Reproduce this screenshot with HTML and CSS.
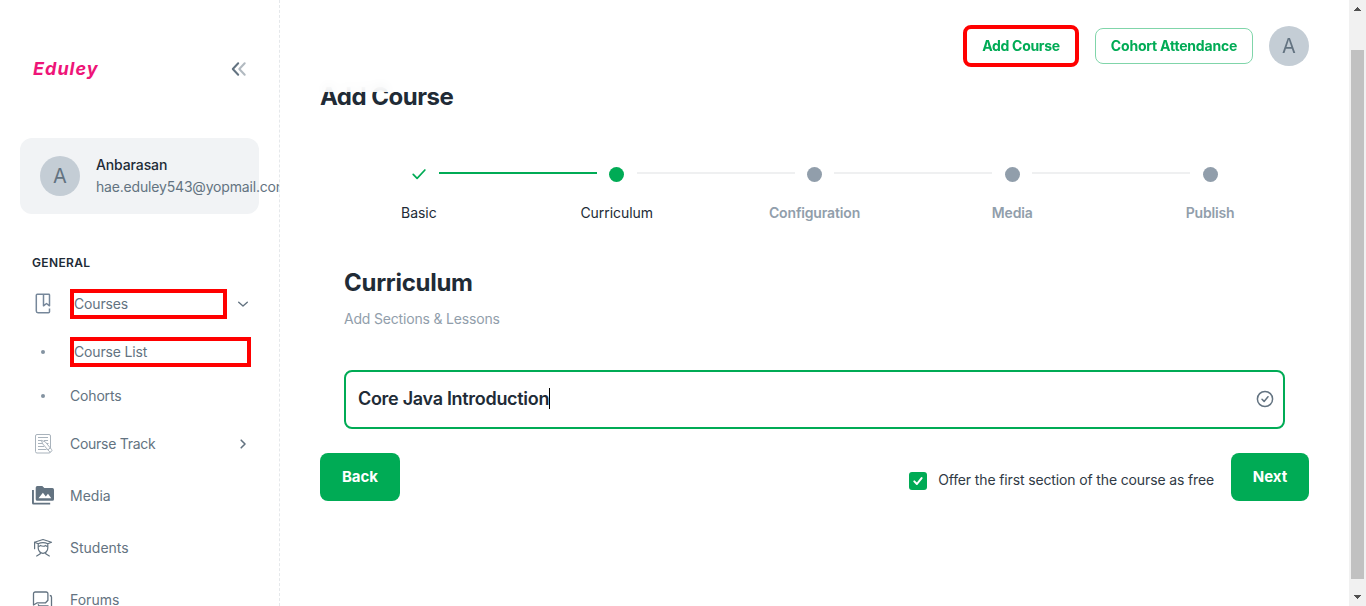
FILE: index.html
```
<!DOCTYPE html>
<html lang="en">
<head>
<meta charset="utf-8">
<title>Add Course</title>
<link rel="stylesheet" href="styles.css">
</head>
<body>
<div class="app">
  <aside class="sidebar">
    <div class="brand">
      <span class="logo">Eduley</span>
      <svg class="collapse" width="16" height="16" viewBox="0 0 16 16" fill="none" stroke="#637381" stroke-width="2" stroke-linecap="round" stroke-linejoin="round"><path d="M7.200 2.200 1.800 8l5.400 5.800"/><path d="M13.700 2.200 8.300 8l5.400 5.800" opacity=".5"/></svg>
    </div>
    <div class="account">
      <span class="avatar">A</span>
      <div class="who"><div class="name">Anbarasan</div><div class="mail">hae.eduley543@yopmail.com</div></div>
    </div>
    <div class="group">GENERAL</div>
    <nav class="nav">
      <a class="item">
        <span class="icon"><svg width="22" height="22" viewBox="0 0 22 22" fill="none" stroke="#76879a" stroke-width="1.500" stroke-linejoin="round"><path d="M17.500 15.500v3.200a1 1 0 0 1-1 1H6a1.700 1.700 0 0 1-1.700-1.700V2.300a1 1 0 0 1 1-1h11.500a.7.7 0 0 1 .7.700V12.800l-3-2.300-3 2.300V1.300"/></svg></span>
        <span class="label marked tight">Courses</span>
        <svg class="arrow" width="16" height="16" viewBox="0 0 16 16" fill="none" stroke="#637381" stroke-width="1.400" stroke-linecap="round" stroke-linejoin="round"><path d="M3.700 6.300 8 10l4.300-3.700"/></svg>
      </a>
      <a class="item"><span class="icon"><i class="bullet"></i></span><span class="label marked tight">Course List</span></a>
      <a class="item sub"><span class="icon"><i class="bullet"></i></span><span class="label tight">Cohorts</span></a>
      <a class="item">
        <span class="icon"><svg width="22" height="22" viewBox="0 0 22 22" fill="none" stroke="#a9b3bc" stroke-width="1"><rect x="3.500" y="1.500" width="15" height="18.500" rx="1.500"/><path d="M6 4.500h10M6 7.500h3.500M12 7.500h4M6 10.500h4.500M15 10.500h1.500M6 13.500h6M6 16.500h8.500"/><path fill="#fff" d="m9.300 7.300 4 1.600 6.200 7.500a1.500 1.500 0 0 1-2.300 2l-6.400-7.400z"/><path d="m16 16.800 2.200-1.800"/></svg></span>
        <span class="label track">Course Track</span>
        <svg class="arrow" width="16" height="16" viewBox="0 0 16 16" fill="none" stroke="#637381" stroke-width="1.600" stroke-linecap="round" stroke-linejoin="round"><path d="M6.200 4.200 10 8l-3.800 3.800"/></svg>
      </a>
      <a class="item">
        <span class="icon"><svg width="22" height="22" viewBox="0 0 22 22" fill="#637381"><path d="M0 5h1.900v12.700h16.300v1.800H1.500A1.500 1.500 0 0 1 0 18z"/><path fill-rule="evenodd" d="M3.700 2.700A1.600 1.600 0 0 1 5.300 1.100h5l2 2h8.100A1.600 1.600 0 0 1 22 4.700v9.500a1.600 1.600 0 0 1-1.600 1.600H5.300a1.600 1.600 0 0 1-1.600-1.600zM6.500 13.300h12.800L16 8.700l-2.200 2.700-2.900-3.700z"/></svg></span>
        <span class="label">Media</span>
      </a>
      <a class="item">
        <span class="icon"><svg width="22" height="22" viewBox="0 0 22 22" fill="none" stroke="#637381" stroke-width="1.200" stroke-linecap="round" stroke-linejoin="round"><path d="M2.500 5.200 11 2.500l8.500 2.700-3.700 1.500C13 5.500 9 5.500 6.200 6.700zM2.600 5.200v6.500M6.200 6.700V11c0 3 2.300 5.300 4.800 5.300s4.800-2.300 4.800-5.300V6.700M6.300 9.500c1 0 1.700-.4 2-1 1.600.8 4.200.8 5.500 0 .3.600.9 1 1.900 1M8.300 15.800v1L4.700 19M13.700 15.800v1l3.600 2.200"/></svg></span>
        <span class="label">Students</span>
      </a>
      <a class="item">
        <span class="icon"><svg width="22" height="22" viewBox="0 0 22 22" fill="none" stroke="#637381" stroke-width="1.300" stroke-linejoin="round"><path d="M1.500 16V4.700A1.700 1.700 0 0 1 3.200 3h11a1.700 1.700 0 0 1 1.700 1.700v6.500l-2.300 2.600H5.300z"/><path d="M17.800 6.500a1.700 1.700 0 0 1 1.700 1.700V20L16 17H8a1.700 1.700 0 0 1-1.700-1.700"/></svg></span>
        <span class="label">Forums</span>
      </a>
    </nav>
  </aside>
  <main class="main">
    <h1 class="title">Add Course</h1>
    <ol class="stepper">
      <li class="step done"><span class="mark"><svg width="24" height="24" viewBox="0 0 24 24" fill="none" stroke="#00ab55" stroke-width="1.700" stroke-linecap="round" stroke-linejoin="round"><path d="m6.200 12.300 3.900 4 7.800-8.300"/></svg></span><span>Basic</span></li>
      <li class="step active"><span class="mark"><i class="dot"></i></span><span>Curriculum</span></li>
      <li class="step"><span class="mark"><i class="dot"></i></span><span>Configuration</span></li>
      <li class="step"><span class="mark"><i class="dot"></i></span><span>Media</span></li>
      <li class="step"><span class="mark"><i class="dot"></i></span><span>Publish</span></li>
    </ol>
    <section class="panel">
      <h2 class="heading">Curriculum</h2>
      <p class="hint">Add Sections &amp; Lessons</p>
      <div class="field">
        <span class="value">Core Java Introduction</span><i class="caret"></i>
        <svg class="ok" width="20" height="20" viewBox="0 0 20 20" fill="none" stroke="#637381" stroke-width="1.500" stroke-linecap="round" stroke-linejoin="round"><circle cx="10" cy="10" r="7.600"/><path d="m7 10.300 2.100 2.100L13 7.700"/></svg>
      </div>
    </section>
    <div class="actions">
      <button class="btn back">Back</button>
      <label class="offer"><span class="check"><svg width="18" height="18" viewBox="0 0 18 18" fill="none" stroke="#fff" stroke-width="2" stroke-linecap="round" stroke-linejoin="round"><path d="m5.300 9.400 2.600 2.600 4.700-5.900"/></svg></span><span class="offer-text">Offer the first section of the course as free</span></label>
      <button class="btn next">Next</button>
    </div>
    <header class="topbar">
      <a class="outline add">Add Course</a>
      <a class="outline cohort">Cohort Attendance</a>
      <span class="avatar">A</span>
    </header>
  </main>
  <div class="scrollbar">
    <svg width="17" height="17" viewBox="0 0 17 17" fill="#505050" shape-rendering="crispEdges"><path d="m5 11 3.500-4 3.500 4z"/></svg>
    <div class="thumb"></div>
    <svg width="17" height="17" viewBox="0 0 17 17" fill="#505050" shape-rendering="crispEdges"><path d="m5 6 3.500 4 3.500-4z"/></svg>
  </div>
</div>
</body>
</html>
```
FILE: styles.css
```
* { box-sizing: border-box; }
body { margin: 0; background: #fff; color: #212b36; font: 14px/22px Inter, "Liberation Sans", sans-serif; }
.app { display: flex; width: 1366px; height: 606px; overflow: hidden; }

.sidebar { width: 280px; flex: none; height: 606px; overflow: hidden; border-right: 1px dashed rgba(145,158,171,.24); }
.brand { display: flex; align-items: center; justify-content: space-between; height: 138px; padding: 0 32px 0 33px; }
.logo { font: italic 700 18px/24px Inter, sans-serif; color: #ee1578; letter-spacing: 1px; }
.account { display: flex; align-items: center; width: 239px; height: 76px; margin-left: 20px; padding: 0 20px; border-radius: 12px; background: #f1f3f5; }
.avatar { display: flex; align-items: center; justify-content: center; flex: none; width: 40px; height: 40px; border-radius: 50%; background: #c4cdd5; color: #637381; font-size: 20px; }
.who { margin-left: 16px; white-space: nowrap; }
.name { font-weight: 500; letter-spacing: -.12px; }
.mail { color: #637381; letter-spacing: -.18px; }
.group { margin: 40px 0 8px 32px; font-size: 12px; line-height: 18px; font-weight: 600; letter-spacing: .35px; }
.nav { display: flex; flex-direction: column; color: #637381; }
.item { display: flex; align-items: center; flex: none; height: 48px; margin-bottom: 4px; padding: 0 28px 0 32px; }
.item:nth-child(1), .item:nth-child(2) { margin-bottom: 0; }
.item.sub { height: 40px; }
.icon { display: flex; align-items: center; justify-content: center; width: 22px; height: 22px; margin-right: 16px; }
.bullet { width: 4px; height: 4px; border-radius: 50%; background: #8493a1; }
.label { flex: 1; }
.tight { letter-spacing: -.17px; }
.track { letter-spacing: -.27px; }
.marked { height: 30px; border: 4px solid #f00; }
.arrow { margin-left: 8px; }

.main { position: relative; flex: 1; padding: 79px 40px 0 40px; }
.title { margin: 0; font-size: 24px; line-height: 36px; font-weight: 700; letter-spacing: -.5px; }
.stepper { display: grid; grid-template-columns: repeat(5, 197.8px); margin: 47px 0 0; padding: 0; list-style: none; }
.step { display: flex; flex-direction: column; align-items: center; position: relative; font-weight: 600; letter-spacing: -.15px; color: #919eab; }
.step.done, .step.active { font-weight: 400; letter-spacing: -.05px; color: #212b36; }
.step + .step::before { content: ""; position: absolute; top: 10px; left: -79px; width: 158px; height: 2px; background: #eff0f1; }
.step.active::before { background: #00ab55; }
.mark { display: flex; align-items: center; justify-content: center; height: 24px; margin-bottom: 16px; }
.dot { width: 15px; height: 15px; border-radius: 50%; background: #919eab; }
.active .dot { background: #00ab55; }
.panel { padding: 41px 24px 0; }
.heading { margin: 0; font-size: 24px; line-height: 36px; font-weight: 700; letter-spacing: -.28px; }
.hint { margin: 7px 0 40px; color: #919eab; letter-spacing: -.18px; }
.field { display: flex; align-items: center; height: 59px; padding: 0 8px 2px 12px; border: 2px solid #00ab55; border-radius: 8px; font-size: 18px; font-weight: 600; letter-spacing: -.3px; }
.caret { width: 1px; height: 21px; background: #000; }
.ok { margin-left: auto; }
.actions { display: flex; margin-top: 24px; }
.btn { height: 48px; border: 0; border-radius: 8px; padding: 0; background: #00ab55; color: #fff; font: 700 15px/26px Inter, sans-serif; }
.back { width: 80px; }
.next { width: 78px; }
.offer { display: flex; align-items: center; margin: 7px 17px 0 auto; color: #303a45; letter-spacing: -.135px; }
.offer-text { padding-bottom: 2px; }
.check { display: flex; width: 18px; height: 18px; margin-right: 11px; border-radius: 3px; background: #00ab55; }
.topbar { position: absolute; top: 0; left: 0; right: 0; display: flex; align-items: center; justify-content: flex-end; height: 92px; padding: 0 40px 0 0; background: rgba(255,255,255,.88); backdrop-filter: blur(6px); }
.outline { display: flex; align-items: center; justify-content: center; height: 36px; border: 1px solid #80d5aa; border-radius: 8px; color: #00ab55; font-weight: 700; letter-spacing: -.2px; white-space: nowrap; }
.add { width: 116px; height: 42px; border: 4px solid #f00; margin-right: 16px; letter-spacing: -.3px; }
.cohort { width: 158px; margin-right: 16px; }

.scrollbar { display: flex; flex-direction: column; align-items: center; flex: none; width: 17px; background: #f1f1f1; }
.thumb { width: 13px; height: 529px; margin: 33px 0 auto; background: #c1c1c1; }
```
